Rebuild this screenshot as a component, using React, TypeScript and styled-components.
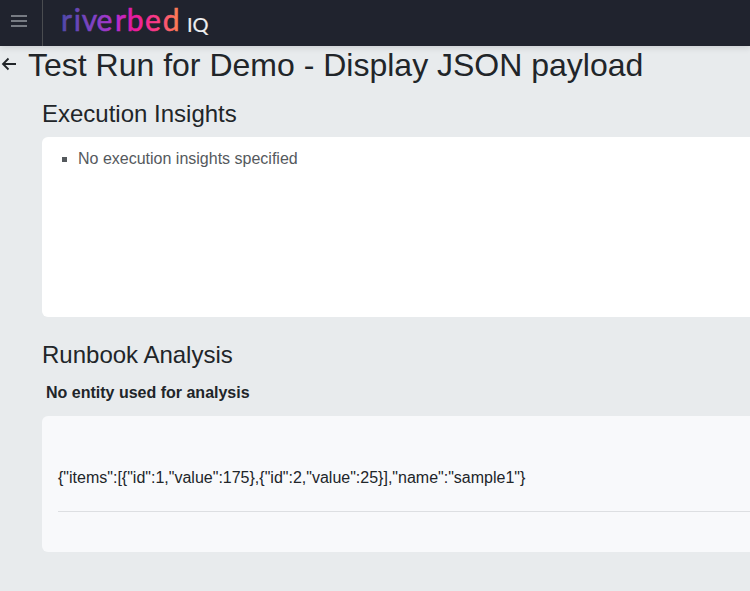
import React from 'react';
import styled, { createGlobalStyle } from 'styled-components';

const GlobalStyle = createGlobalStyle`
  * { box-sizing: border-box; }
  html, body { height: 100%; }
  body {
    margin: 0;
    overflow: hidden;
    background: #e8ebed;
    color: #212529;
    font: 16px/24px "Liberation Sans", Arial, sans-serif;
  }
`;

const Header = styled.header`
  display: flex;
  height: 46px;
  background: #20232e;
  box-shadow: 0 2px 6px rgba(32, 35, 46, 0.14);
`;

const MenuButton = styled.button`
  display: flex;
  align-items: flex-start;
  width: 43px;
  padding: 14px 0 0 11px;
  border: 0;
  border-right: 1px solid #4a4c50;
  background: none;
`;

const Brand = styled.svg`
  display: block;
  margin-left: 12px;
`;

const TitleRow = styled.div`
  display: flex;
  align-items: flex-start;
  height: 38px;
`;

const BackButton = styled.button`
  width: 28px;
  padding: 11px 0 0 1px;
  border: 0;
  background: none;
  text-align: left;

  svg { display: block; }
`;

const Title = styled.h1`
  margin: 0;
  font-size: 32px;
  font-weight: 400;
  line-height: 38px;
  white-space: nowrap;
`;

const Content = styled.main`
  padding-left: 42px;
`;

const SectionTitle = styled.h2<{ $top: number; $bottom: number }>`
  margin: ${({ $top, $bottom }) => `${$top}px 0 ${$bottom}px`};
  font-size: 24px;
  font-weight: 400;
  line-height: 29px;
`;

const InsightsCard = styled.section`
  height: 180px;
  padding-top: 10px;
  border-radius: 6px 0 0 6px;
  background: #fff;
`;

const InsightList = styled.ul`
  margin: 0;
  padding: 0 0 0 20px;
  list-style: none;
  color: #55595d;
`;

const Insight = styled.li`
  display: flex;
  align-items: center;
  gap: 11px;

  &::before {
    content: '';
    width: 5px;
    height: 5px;
    margin-top: 1px;
    background: #55595d;
  }
`;

const EntityLabel = styled.div`
  margin: 12px 0 11px 4px;
  font-weight: 700;
`;

const AnalysisCard = styled.section`
  height: 136px;
  padding: 50px 0 0 16px;
  border-radius: 6px 0 0 6px;
  background: #f8f9fb;
`;

const Payload = styled.div`
  height: 46px;
  border-bottom: 1px solid #dddfe2;
`;

export default function App() {
  return (
    <>
      <GlobalStyle />
      <Header>
        <MenuButton aria-label="Menu">
          <svg width="16" height="14" stroke="#777b83" strokeWidth="2">
            <path d="M0 2h16M0 7h16M0 12h16" />
          </svg>
        </MenuButton>
        <Brand width="160" height="46" aria-label="riverbed IQ">
          <defs>
            <linearGradient id="brand" gradientUnits="userSpaceOnUse" x1="7" y1="0" x2="124" y2="0">
              <stop offset="0" stopColor="#5149a8" />
              <stop offset="0.27" stopColor="#8043c5" />
              <stop offset="0.46" stopColor="#b42fce" />
              <stop offset="0.62" stopColor="#ec189d" />
              <stop offset="0.81" stopColor="#fb3c84" />
              <stop offset="1" stopColor="#ff8050" />
            </linearGradient>
          </defs>
          <text x="6 18.800 26.800 41.600 60 71.800 90 107.800" y="31" fill="url(#brand)" stroke="url(#brand)" strokeWidth="0.6" fontFamily="Lato, sans-serif" fontSize="30">riverbed</text>
          <text x="132 137.500" y="31.500" fill="#eeeef0" stroke="#eeeef0" strokeWidth="0.2" fontFamily="Lato, sans-serif" fontSize="20">IQ</text>
        </Brand>
      </Header>
      <TitleRow>
        <BackButton aria-label="Back">
          <svg width="16" height="15" fill="none" stroke="#212529" strokeWidth="1.8">
            <path d="M15 7H2M7.500 1.500 2 7l5.500 5.500" />
          </svg>
        </BackButton>
        <Title>Test Run for Demo - Display JSON payload</Title>
      </TitleRow>
      <Content>
        <SectionTitle $top={15} $bottom={9}>Execution Insights</SectionTitle>
        <InsightsCard>
          <InsightList>
            <Insight>No execution insights specified</Insight>
          </InsightList>
        </InsightsCard>
        <SectionTitle $top={23} $bottom={8}>Runbook Analysis</SectionTitle>
        <EntityLabel>No entity used for analysis</EntityLabel>
        <AnalysisCard>
          <Payload>{'{"items":[{"id":1,"value":175},{"id":2,"value":25}],"name":"sample1"}'}</Payload>
        </AnalysisCard>
      </Content>
    </>
  );
}
